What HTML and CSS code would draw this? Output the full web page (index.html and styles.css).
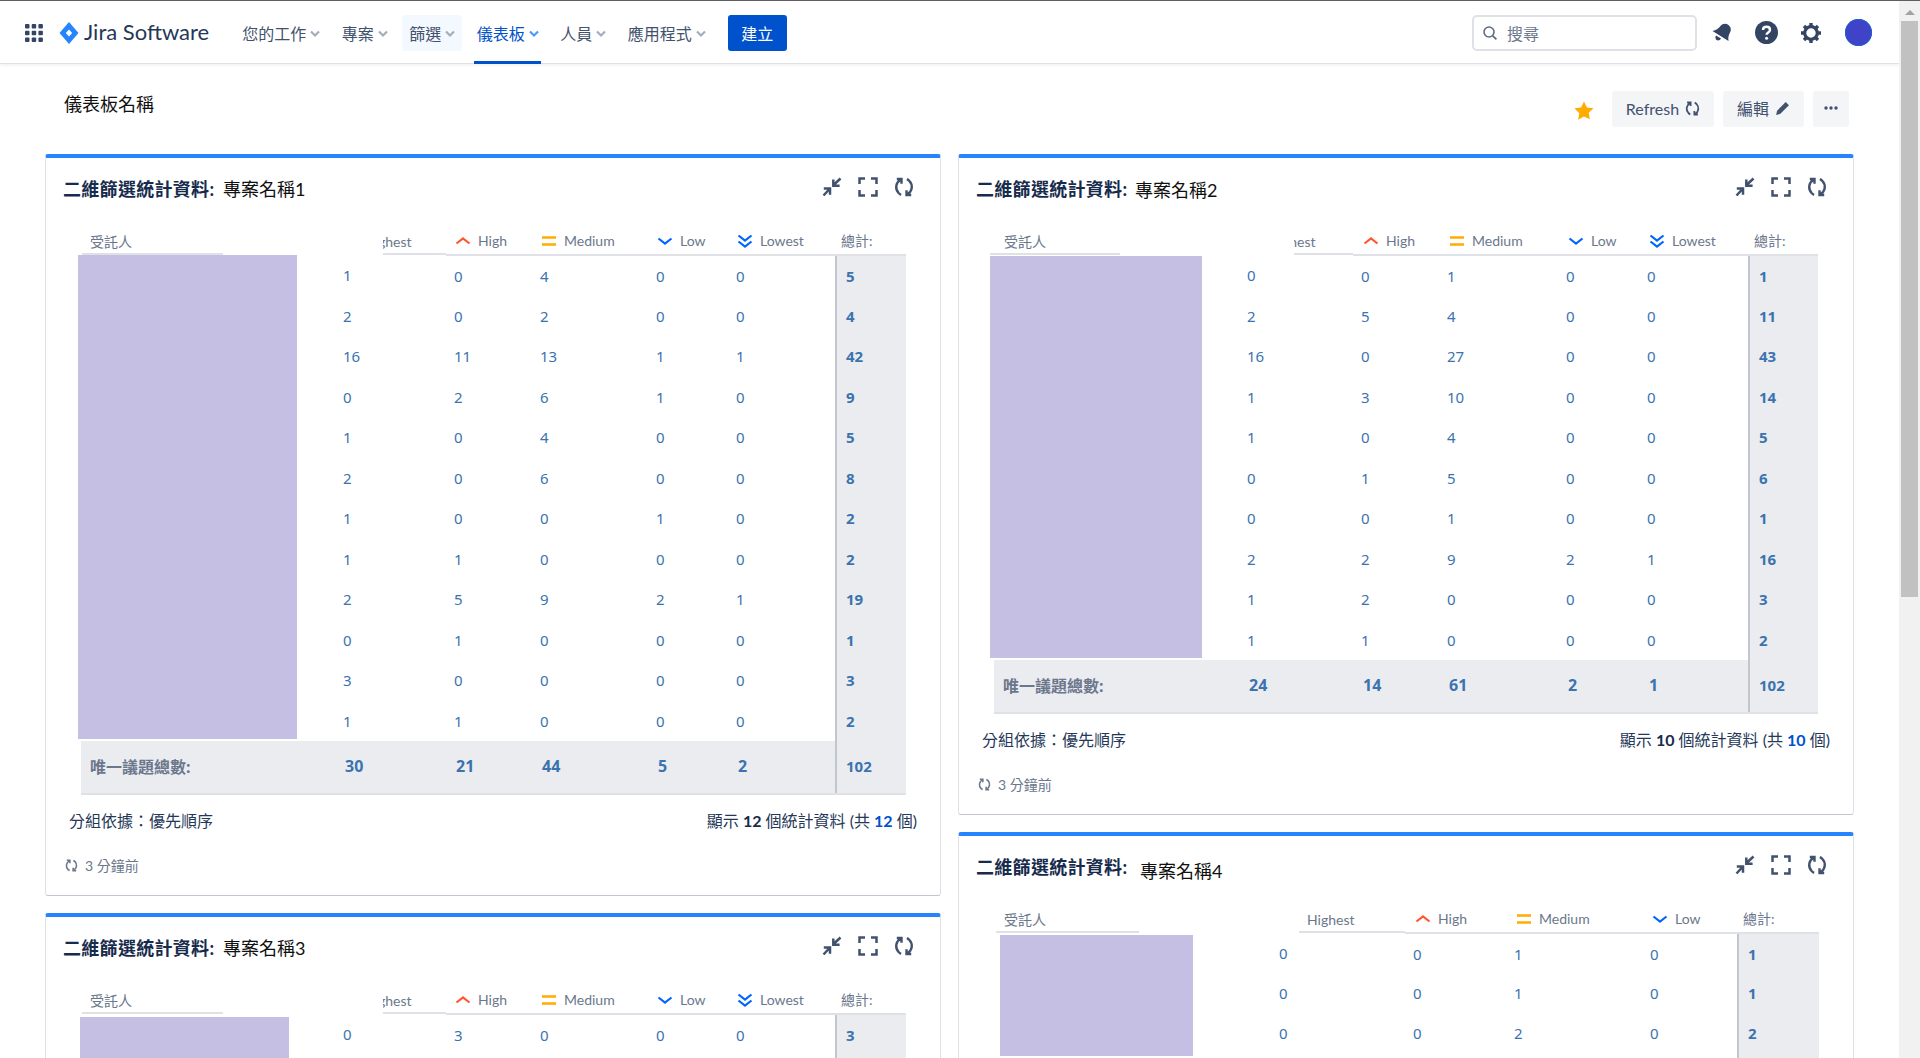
FILE: index.html
```html
<!DOCTYPE html>
<html>
<head>
	<meta charset="utf-8">
	<title>儀表板名稱</title>
	<link rel="stylesheet" href="styles.css">
</head>
<body>

	<svg class="defs" width="0" height="0">
		<symbol id="i-chev" viewBox="0 0 10 8"><path d="M1 1.5l4 4 4-4" fill="none" stroke="currentColor" stroke-width="2.2"/></symbol>
		<symbol id="i-refresh" viewBox="0 0 20 20"><path d="M2.800 2h4.700v4.700M6.600 2.800C1.600 5.600.8 12 4.600 16c.8.800 1.600 1.400 2.500 1.800M17.200 18h-4.700v-4.700M13.400 17.200c5-2.800 5.800-9.200 2-13.200-.8-.8-1.600-1.400-2.500-1.800" fill="none" stroke="currentColor" stroke-width="2.400"/></symbol>
		<symbol id="i-collapse" viewBox="0 0 20 20"><path d="M18.500 1.500l-7.500 7M11.300 2.500v6.300h6.300M1.500 18.500l6-6.500M1.800 11.500h6.200v6.300" fill="none" stroke="currentColor" stroke-width="2.500"/></symbol>
		<symbol id="i-full" viewBox="0 0 20 20"><path d="M7 1.500H1.500V7M13 1.500h5.500V7M7 18.500H1.500V13M13 18.500h5.500V13" fill="none" stroke="currentColor" stroke-width="2.500"/></symbol>
		<symbol id="i-high" viewBox="0 0 16 16"><path d="M1.500 10.500L8 5.500l6.500 5" fill="none" stroke="#ff5630" stroke-width="2.200"/></symbol>
		<symbol id="i-medium" viewBox="0 0 16 16"><path d="M1 4.500h14M1 11.500h14" fill="none" stroke="#ffab00" stroke-width="2.400"/></symbol>
		<symbol id="i-low" viewBox="0 0 16 16"><path d="M1.500 5.500L8 10.500l6.500-5" fill="none" stroke="#0065ff" stroke-width="2.200"/></symbol>
		<symbol id="i-lowest" viewBox="0 0 16 16"><path d="M1.500 2.500l6.500 5 6.500-5M1.500 8.500l6.500 5 6.500-5" fill="none" stroke="#0065ff" stroke-width="2.200"/></symbol>
	</svg>

	<div class="topline"></div>
	<div class="shell">
		<div class="page">
			<header class="topbar">
				<svg class="apps" width="20" height="20" viewBox="0 0 20 20" fill="#344563">
					<rect x="1" y="1" width="4.500" height="4.500" rx="1"/><rect x="7.700" y="1" width="4.500" height="4.500" rx="1"/><rect x="14.400" y="1" width="4.500" height="4.500" rx="1"/>
					<rect x="1" y="7.700" width="4.500" height="4.500" rx="1"/><rect x="7.700" y="7.700" width="4.500" height="4.500" rx="1"/><rect x="14.400" y="7.700" width="4.500" height="4.500" rx="1"/>
					<rect x="1" y="14.400" width="4.500" height="4.500" rx="1"/><rect x="7.700" y="14.400" width="4.500" height="4.500" rx="1"/><rect x="14.400" y="14.400" width="4.500" height="4.500" rx="1"/>
				</svg>
				<svg class="logo-mark" width="20" height="22" viewBox="0 0 20 22">
					<path d="M10 0l9.500 11L10 22 .5 11z" fill="#2684ff"/>
					<path d="M10 7.400l3.200 3.600-3.200 3.600L6.800 11z" fill="#fff"/>
				</svg>
				<span class="logo-text">Jira Software</span>
				<nav class="nav">
					<a class="nav-item">您的工作<svg class="chev"><use href="#i-chev"/></svg></a>
					<a class="nav-item">專案<svg class="chev"><use href="#i-chev"/></svg></a>
					<a class="nav-item hover">篩選<svg class="chev"><use href="#i-chev"/></svg></a>
					<a class="nav-item active">儀表板<svg class="chev"><use href="#i-chev"/></svg></a>
					<a class="nav-item">人員<svg class="chev"><use href="#i-chev"/></svg></a>
					<a class="nav-item">應用程式<svg class="chev"><use href="#i-chev"/></svg></a>
				</nav>
				<button class="create">建立</button>
				<div class="search">
					<svg width="16" height="16" viewBox="0 0 16 16"><circle cx="7" cy="7" r="5" fill="none" stroke="#5e6c84" stroke-width="1.600"/><path d="M10.800 10.800l3.600 3.600" stroke="#5e6c84" stroke-width="1.800"/></svg>
					<span>搜尋</span>
				</div>
				<svg class="bell" width="20" height="19" viewBox="0 0 20 19" fill="#344563">
					<path d="M.5 8C4 7.500 6.500 5.500 8.500 3c2-2.500 5.500-3 8-1s3 5 1.500 7.500c-1.500 2.500-2 5.500-1.500 8.500z"/>
					<path d="M4 12.500l5 3c-1 2-3 2.500-4.500 1.500C3.300 16 3 14 4 12.500z"/>
				</svg>
				<svg class="help" width="23" height="23" viewBox="0 0 23 23">
					<circle cx="11.500" cy="11.500" r="11.500" fill="#344563"/>
					<path d="M8 9c0-2 1.500-3.200 3.600-3.200S15 7 15 8.900c0 2.600-3.400 2.500-3.400 4.800" fill="none" stroke="#fff" stroke-width="2.400"/>
					<circle cx="11.600" cy="17.200" r="1.500" fill="#fff"/>
				</svg>
				<svg class="gear" width="20" height="20" viewBox="0 0 20 20">
					<circle cx="10" cy="10" r="6.300" fill="none" stroke="#344563" stroke-width="3.200"/>
					<path d="M10 0v4M10 16v4M0 10h4M16 10h4M3 3l2.800 2.800M14.200 14.200L17 17M3 17l2.800-2.800M14.200 5.800L17 3" stroke="#344563" stroke-width="3.400"/>
				</svg>
				<div class="avatar"></div>
			</header>

			<main class="main">
				<div class="dash-head">
					<h1 class="dash-title">儀表板名稱</h1>
					<div class="dash-actions">
						<svg class="star" width="20" height="19" viewBox="0 0 20 19"><path d="M10 .5l2.900 6 6.600.8-4.800 4.500 1.200 6.500L10 15.600l-5.900 3.200 1.200-6.500L.5 7.300l6.600-.8z" fill="#ffab00"/></svg>
						<button class="btn btn-refresh">Refresh<svg class="btn-icon"><use href="#i-refresh"/></svg></button>
						<button class="btn btn-edit">編輯<svg class="btn-icon" viewBox="0 0 14 14"><path d="M10 1l3 3-8 8-4 1 1-4z" fill="#42526e"/></svg></button>
						<button class="btn btn-more"><svg width="14" height="4" viewBox="0 0 14 4" fill="#42526e"><circle cx="2" cy="2" r="1.700"/><circle cx="7" cy="2" r="1.700"/><circle cx="12" cy="2" r="1.700"/></svg></button>
					</div>
				</div>

				<div class="columns">
					<div class="column">
						<section class="card t-one">
							<div class="card-top">
								<h2 class="card-title"><b>二維篩選統計資料:</b> <span>專案名稱1</span></h2>
								<div class="tools">
									<svg><use href="#i-collapse"/></svg><svg><use href="#i-full"/></svg><svg><use href="#i-refresh"/></svg>
								</div>
							</div>
							<table class="stats">
								<colgroup><col class="c0"><col class="c1"><col class="c2"><col class="c3"><col class="c4"><col class="c5"><col class="c6"></colgroup>
								<thead>
									<tr>
										<th><div class="who">受託人</div></th>
										<th><div class="clip"><span>Highest</span></div></th>
										<th class="line"><svg class="pri"><use href="#i-high"/></svg>High</th>
										<th class="line"><svg class="pri"><use href="#i-medium"/></svg>Medium</th>
										<th class="line"><svg class="pri"><use href="#i-low"/></svg>Low</th>
										<th class="line"><svg class="pri"><use href="#i-lowest"/></svg>Lowest</th>
										<th class="line sum-head">總計:</th>
									</tr>
								</thead>
								<tbody>
									<tr><td rowspan="12" class="who-cell"><div class="mask"></div></td><td>1</td><td>0</td><td>4</td><td>0</td><td>0</td><td class="sum">5</td></tr>
									<tr><td>2</td><td>0</td><td>2</td><td>0</td><td>0</td><td class="sum">4</td></tr>
									<tr><td>16</td><td>11</td><td>13</td><td>1</td><td>1</td><td class="sum">42</td></tr>
									<tr><td>0</td><td>2</td><td>6</td><td>1</td><td>0</td><td class="sum">9</td></tr>
									<tr><td>1</td><td>0</td><td>4</td><td>0</td><td>0</td><td class="sum">5</td></tr>
									<tr><td>2</td><td>0</td><td>6</td><td>0</td><td>0</td><td class="sum">8</td></tr>
									<tr><td>1</td><td>0</td><td>0</td><td>1</td><td>0</td><td class="sum">2</td></tr>
									<tr><td>1</td><td>1</td><td>0</td><td>0</td><td>0</td><td class="sum">2</td></tr>
									<tr><td>2</td><td>5</td><td>9</td><td>2</td><td>1</td><td class="sum">19</td></tr>
									<tr><td>0</td><td>1</td><td>0</td><td>0</td><td>0</td><td class="sum">1</td></tr>
									<tr><td>3</td><td>0</td><td>0</td><td>0</td><td>0</td><td class="sum">3</td></tr>
									<tr><td>1</td><td>1</td><td>0</td><td>0</td><td>0</td><td class="sum">2</td></tr>
								</tbody>
								<tfoot>
									<tr><td class="foot-label">唯一議題總數:</td><td>30</td><td>21</td><td>44</td><td>5</td><td>2</td><td class="sum">102</td></tr>
								</tfoot>
							</table>
							<div class="meta"><span>分組依據：優先順序</span><span>顯示 <b>12</b> 個統計資料 (共 <b class="blue">12</b> 個)</span></div>
							<div class="updated"><svg><use href="#i-refresh"/></svg>3 分鐘前</div>
						</section>

						<section class="card t-one t-three">
							<div class="card-top">
								<h2 class="card-title"><b>二維篩選統計資料:</b> <span>專案名稱3</span></h2>
								<div class="tools">
									<svg><use href="#i-collapse"/></svg><svg><use href="#i-full"/></svg><svg><use href="#i-refresh"/></svg>
								</div>
							</div>
							<table class="stats">
								<colgroup><col class="c0"><col class="c1"><col class="c2"><col class="c3"><col class="c4"><col class="c5"><col class="c6"></colgroup>
								<thead>
									<tr>
										<th><div class="who">受託人</div></th>
										<th><div class="clip"><span>Highest</span></div></th>
										<th class="line"><svg class="pri"><use href="#i-high"/></svg>High</th>
										<th class="line"><svg class="pri"><use href="#i-medium"/></svg>Medium</th>
										<th class="line"><svg class="pri"><use href="#i-low"/></svg>Low</th>
										<th class="line"><svg class="pri"><use href="#i-lowest"/></svg>Lowest</th>
										<th class="line sum-head">總計:</th>
									</tr>
								</thead>
								<tbody>
									<tr><td rowspan="2" class="who-cell"><div class="mask"></div></td><td>0</td><td>3</td><td>0</td><td>0</td><td>0</td><td class="sum">3</td></tr>
									<tr><td></td><td></td><td></td><td></td><td></td><td class="sum"></td></tr>
								</tbody>
							</table>
						</section>
					</div>

					<div class="column">
						<section class="card t-two">
							<div class="card-top">
								<h2 class="card-title"><b>二維篩選統計資料:</b> <span>專案名稱2</span></h2>
								<div class="tools">
									<svg><use href="#i-collapse"/></svg><svg><use href="#i-full"/></svg><svg><use href="#i-refresh"/></svg>
								</div>
							</div>
							<table class="stats">
								<colgroup><col class="c0"><col class="c1"><col class="c2"><col class="c3"><col class="c4"><col class="c5"><col class="c6"></colgroup>
								<thead>
									<tr>
										<th><div class="who">受託人</div></th>
										<th><div class="clip"><span>Highest</span></div></th>
										<th class="line"><svg class="pri"><use href="#i-high"/></svg>High</th>
										<th class="line"><svg class="pri"><use href="#i-medium"/></svg>Medium</th>
										<th class="line"><svg class="pri"><use href="#i-low"/></svg>Low</th>
										<th class="line"><svg class="pri"><use href="#i-lowest"/></svg>Lowest</th>
										<th class="line sum-head">總計:</th>
									</tr>
								</thead>
								<tbody>
									<tr><td rowspan="10" class="who-cell"><div class="mask"></div></td><td>0</td><td>0</td><td>1</td><td>0</td><td>0</td><td class="sum">1</td></tr>
									<tr><td>2</td><td>5</td><td>4</td><td>0</td><td>0</td><td class="sum">11</td></tr>
									<tr><td>16</td><td>0</td><td>27</td><td>0</td><td>0</td><td class="sum">43</td></tr>
									<tr><td>1</td><td>3</td><td>10</td><td>0</td><td>0</td><td class="sum">14</td></tr>
									<tr><td>1</td><td>0</td><td>4</td><td>0</td><td>0</td><td class="sum">5</td></tr>
									<tr><td>0</td><td>1</td><td>5</td><td>0</td><td>0</td><td class="sum">6</td></tr>
									<tr><td>0</td><td>0</td><td>1</td><td>0</td><td>0</td><td class="sum">1</td></tr>
									<tr><td>2</td><td>2</td><td>9</td><td>2</td><td>1</td><td class="sum">16</td></tr>
									<tr><td>1</td><td>2</td><td>0</td><td>0</td><td>0</td><td class="sum">3</td></tr>
									<tr><td>1</td><td>1</td><td>0</td><td>0</td><td>0</td><td class="sum">2</td></tr>
								</tbody>
								<tfoot>
									<tr><td class="foot-label">唯一議題總數:</td><td>24</td><td>14</td><td>61</td><td>2</td><td>1</td><td class="sum">102</td></tr>
								</tfoot>
							</table>
							<div class="meta"><span>分組依據：優先順序</span><span>顯示 <b>10</b> 個統計資料 (共 <b class="blue">10</b> 個)</span></div>
							<div class="updated"><svg><use href="#i-refresh"/></svg>3 分鐘前</div>
						</section>

						<section class="card t-four">
							<div class="card-top">
								<h2 class="card-title"><b>二維篩選統計資料:</b> <span>專案名稱4</span></h2>
								<div class="tools">
									<svg><use href="#i-collapse"/></svg><svg><use href="#i-full"/></svg><svg><use href="#i-refresh"/></svg>
								</div>
							</div>
							<table class="stats">
								<colgroup><col class="c0"><col class="c1"><col class="c2"><col class="c3"><col class="c4"><col class="c5"></colgroup>
								<thead>
									<tr>
										<th><div class="who">受託人</div></th>
										<th><div class="clip"><span>Highest</span></div></th>
										<th class="line"><svg class="pri"><use href="#i-high"/></svg>High</th>
										<th class="line"><svg class="pri"><use href="#i-medium"/></svg>Medium</th>
										<th class="line"><svg class="pri"><use href="#i-low"/></svg>Low</th>
										<th class="line sum-head">總計:</th>
									</tr>
								</thead>
								<tbody>
									<tr><td rowspan="4" class="who-cell"><div class="mask"></div></td><td>0</td><td>0</td><td>1</td><td>0</td><td class="sum">1</td></tr>
									<tr><td>0</td><td>0</td><td>1</td><td>0</td><td class="sum">1</td></tr>
									<tr><td>0</td><td>0</td><td>2</td><td>0</td><td class="sum">2</td></tr>
									<tr><td></td><td></td><td></td><td></td><td class="sum"></td></tr>
								</tbody>
							</table>
						</section>
					</div>
				</div>
			</main>
		</div>

		<div class="scrollbar">
			<div class="scroll-arrow"></div>
			<div class="scroll-thumb"></div>
		</div>
	</div>

</body>
</html>
```

FILE: styles.css
```css
html, body {
	height: 100%;
	overflow: hidden;
}

body {
	margin: 0;
	padding: 0;
	background: #fff;
	color: #172b4d;
	font-family: "Lato", "Noto Sans CJK TC", sans-serif;
	font-size: 16px;
}

.defs {
	display: block;
	height: 0;
}

.topline {
	height: 1px;
	background: #5f5f5f;
}

.shell {
	display: flex;
	height: 1057px;
}

.page {
	width: 1899px;
	height: 1057px;
	overflow: hidden;
}

/* top bar */

.topbar {
	display: flex;
	align-items: center;
	height: 61px;
	padding: 1px 27px 0 24px;
	border-bottom: 1px solid #dfe1e6;
	box-shadow: 0 1px 3px rgba(9, 30, 66, 0.08);
}

.logo-mark {
	margin-left: 15px;
}

.logo-text {
	margin: 0 0 2px 5px;
	font-size: 22px;
	color: #253858;
	white-space: nowrap;
}

.nav {
	display: flex;
	align-self: stretch;
	gap: 7.5px;
	margin-left: 26px;
}

.nav-item {
	position: relative;
	display: flex;
	align-items: center;
	height: 36px;
	margin-top: 13px;
	padding: 0 7px;
	border-radius: 3px;
	color: #42526e;
	white-space: nowrap;
}

.chev {
	width: 10px;
	height: 8px;
	margin: 2px 0 0 4px;
	color: #a5adba;
}

.nav-item.hover {
	background: #f4f8ff;
}

.nav-item.active {
	color: #0052cc;
}

.nav-item.active .chev {
	color: #4c9aff;
}

.nav-item.active:after {
	content: "";
	position: absolute;
	left: 4px;
	right: 5px;
	bottom: -13px;
	height: 3px;
	background: #0052cc;
}

.create {
	width: 59px;
	height: 36px;
	margin-left: 15px;
	border: 0;
	border-radius: 3px;
	background: #0052cc;
	color: #fff;
	font: inherit;
}

.search {
	display: flex;
	align-items: center;
	box-sizing: border-box;
	width: 225px;
	height: 36px;
	margin-left: auto;
	padding-left: 8px;
	border: 2px solid #dfe1e6;
	border-radius: 5px;
	color: #6b778c;
}

.search span {
	margin-left: 9px;
}

.bell {
	margin-left: 15px;
}

.help {
	margin-left: 23px;
}

.gear {
	margin-left: 23px;
}

.avatar {
	width: 27px;
	height: 27px;
	margin-left: 24px;
	border-radius: 50%;
	background: #3f43c8;
	box-shadow: inset 0 0 0 1px #1f5fd0;
}

/* dashboard */

.main {
	padding: 0 45px;
}

.dash-head {
	display: flex;
	justify-content: space-between;
	height: 90px;
}

.dash-title {
	margin: 27px 0 0 19px;
	font-size: 18px;
	font-weight: normal;
	line-height: 26px;
	color: #111;
}

.dash-actions {
	display: flex;
	align-items: center;
	align-self: flex-start;
	margin: 27px 5px 0 0;
}

.star {
	margin: 2px 18px 0 0;
}

.btn {
	display: flex;
	align-items: center;
	justify-content: center;
	height: 36px;
	margin-left: 9px;
	padding: 0 0 2px;
	border: 0;
	border-radius: 3px;
	background: #f4f5f7;
	color: #42526e;
	font: inherit;
}

.star + .btn {
	margin-left: 0;
}

.btn-refresh {
	width: 102px;
}

.btn-edit {
	width: 81px;
}

.btn-more {
	width: 36px;
}

.btn-icon {
	width: 15px;
	height: 15px;
	margin-left: 6px;
	color: #42526e;
}

.columns {
	display: flex;
	gap: 17px;
}

.column {
	display: flex;
	flex-direction: column;
	gap: 17px;
	width: 896px;
}

/* gadget card */

.card {
	box-sizing: border-box;
	border: 1px solid #dfe1e6;
	border-top: 4px solid #2684ff;
	border-bottom: 1px solid #c1c7d0;
	border-radius: 3px;
	padding-bottom: 12px;
	background: #fff;
}

.card-top {
	display: flex;
	justify-content: space-between;
	height: 64px;
	padding: 0 26px 0 17px;
}

.card-title {
	margin: 18px 0 0;
	font-size: 18px;
	font-weight: normal;
	line-height: 26px;
	color: #111;
}

.card-title b {
	font-weight: bold;
	letter-spacing: 0.3px;
	color: #172b4d;
}

.card-title span {
	margin-left: 4px;
}

.t-two .card-title span {
	margin-left: 3px;
	position: relative;
	top: 1px;
}

.t-four .card-title span {
	margin-left: 8px;
	position: relative;
	top: 4px;
}

.tools {
	display: flex;
	gap: 16px;
	margin-top: 19px;
	color: #42526e;
}

.tools svg {
	width: 20px;
	height: 20px;
}

.stats {
	table-layout: fixed;
	border-collapse: collapse;
	border-spacing: 0;
	margin-left: 35px;
	font-family: "Noto Sans", "Noto Sans CJK TC", sans-serif;
	font-size: 15px;
}

.t-one .stats {
	width: 825px;
}

.t-two .stats {
	width: 824px;
}

.t-four .stats {
	width: 825px;
}

.t-one .c0 { width: 254px; }
.t-one .c1 { width: 111px; }
.t-one .c2 { width: 86px; }
.t-one .c3 { width: 116px; }
.t-one .c4 { width: 80px; }
.t-one .c5 { width: 108px; }
.t-one .c6 { width: 70px; }

.t-two .c0 { width: 245px; }
.t-two .c1 { width: 114px; }
.t-two .c2 { width: 86px; }
.t-two .c3 { width: 119px; }
.t-two .c4 { width: 81px; }
.t-two .c5 { width: 110px; }
.t-two .c6 { width: 69px; }

.t-four .c0 { width: 277px; }
.t-four .c1 { width: 134px; }
.t-four .c2 { width: 101px; }
.t-four .c3 { width: 136px; }
.t-four .c4 { width: 96px; }
.t-four .c5 { width: 81px; }

.stats th {
	height: 33px;
	padding: 0;
	vertical-align: bottom;
	text-align: left;
	font-family: "Lato", "Noto Sans CJK TC", sans-serif;
	font-size: 14px;
	font-weight: normal;
	color: #6b778c;
}

.stats th.line {
	box-sizing: border-box;
	padding: 0 0 3px 10px;
	border-bottom: 2px solid #dfe1e6;
	line-height: 20px;
	white-space: nowrap;
}

.t-one th.line {
	position: relative;
	left: -1px;
}

.stats th.sum-head {
	padding-left: 5px;
	left: 0;
}

.pri {
	width: 16px;
	height: 16px;
	margin-right: 7px;
	vertical-align: -3px;
}

.who {
	box-sizing: border-box;
	height: 23px;
	margin-left: 1px;
	padding-left: 8px;
	border-bottom: 2px solid #dfe1e6;
	line-height: 20px;
}

.t-one .who {
	width: 141px;
}

.t-two .who {
	width: 130px;
	margin-left: -4px;
	padding-left: 14px;
}

.t-four .who {
	width: 143px;
	margin-left: 2px;
	padding-left: 8px;
}

.clip {
	overflow: hidden;
	height: 23px;
	border-bottom: 2px solid #dfe1e6;
	line-height: 20px;
	box-sizing: border-box;
	white-space: nowrap;
}

.t-one .clip {
	margin-left: 48px;
}

.t-one .clip span {
	margin-left: -19px;
}

.t-two .clip {
	margin-left: 55px;
}

.t-two .clip span {
	margin-left: -26px;
}

.t-four .clip {
	margin-left: 28px;
}

.t-four .clip span {
	margin-left: 8px;
}

.stats td {
	height: 40.5px;
	padding: 0 0 0 8px;
	box-sizing: border-box;
	color: #3b73af;
}

.t-four .stats td {
	height: 40px;
}

.who-cell {
	vertical-align: top;
}

.stats .who-cell {
	padding: 0;
}

.mask {
	background: #c6bfe4;
}

.t-one .mask {
	width: 219px;
	height: 484px;
	margin-left: -3px;
}

.t-two .mask {
	width: 212px;
	height: 402px;
	margin: 1px 0 0 -4px;
}

.t-three .mask {
	width: 209px;
	height: 60px;
	margin: 3px 0 0 -1px;
}

.t-four .mask {
	width: 193px;
	height: 121px;
	margin: 2px 0 0 6px;
}

.stats .sum {
	padding-left: 9px;
	border-left: 2px solid #c1c7d0;
	background: #ebecf0;
	font-weight: bold;
}

.stats tfoot td {
	height: 53px;
	padding: 0 0 2px 10px;
	border-bottom: 2px solid #dfe1e6;
	background: #ebecf0;
	font-size: 16px;
	font-weight: bold;
}

.stats tfoot .sum {
	padding-left: 9px;
	font-size: 15px;
}

.stats tfoot .foot-label {
	padding-left: 9px;
	color: #6b778c;
}

.meta {
	display: flex;
	justify-content: space-between;
	align-items: center;
	height: 52px;
	padding: 0 23px 2px;
	box-sizing: border-box;
	color: #253858;
}

.meta b {
	color: #172b4d;
}

.meta .blue {
	color: #0052cc;
}

.updated {
	display: flex;
	align-items: center;
	height: 36px;
	padding-left: 19px;
	font-size: 14px;
	color: #6b778c;
}

.updated svg {
	width: 13px;
	height: 13px;
	margin-right: 7px;
	color: #6b778c;
}

/* page scrollbar */

.scrollbar {
	width: 21px;
	height: 1057px;
	background: #f1f1f1;
}

.scroll-arrow {
	width: 0;
	height: 0;
	margin: 9px auto 6px;
	border-left: 5px solid transparent;
	border-right: 5px solid transparent;
	border-bottom: 5px solid #a3a3a3;
}

.scroll-thumb {
	width: 17px;
	height: 576px;
	margin-left: 2px;
	background: #c1c1c1;
}
```
